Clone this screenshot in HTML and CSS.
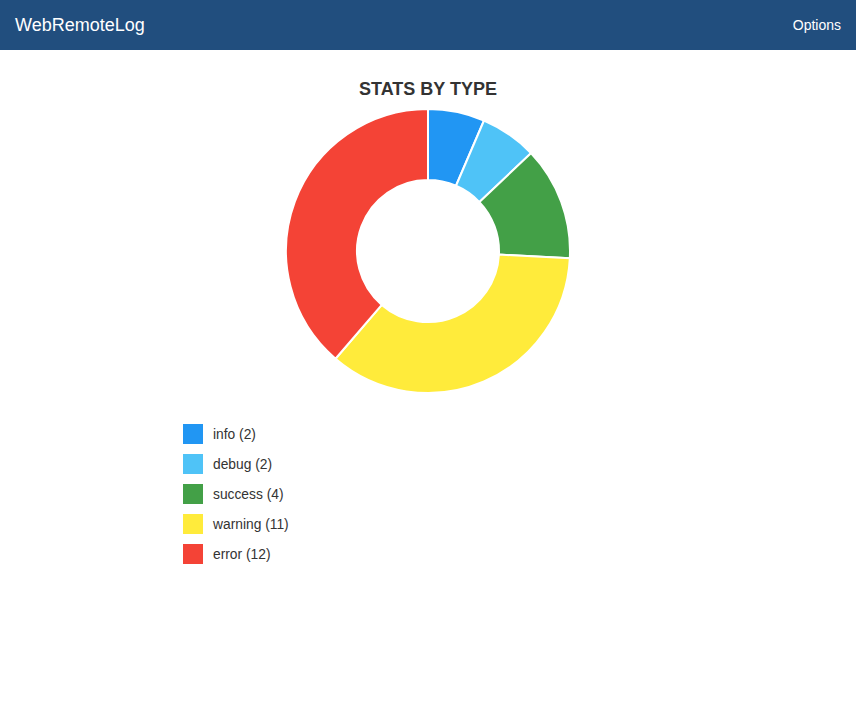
FILE: index.html
```html
<!DOCTYPE html>
<html>
<head>
<meta charset="utf-8">
<title>WebRemoteLog</title>
<link rel="stylesheet" href="styles.css">
</head>
<body>
<header class="topbar">
  <span class="brand">WebRemoteLog</span>
  <span class="options">Options</span>
</header>
<main class="content">
  <h1 class="chart-title">STATS BY TYPE</h1>
  <svg class="donut" width="288" height="288" viewBox="-144 -144 288 288">
    <g stroke="#fff" stroke-width="2" stroke-linejoin="round">
      <path fill="#2196f3" d="M0,-142 A142,142 0 0 1 56,-130.5 L28,-65.25 A71,71 0 0 0 0,-71 Z"/>
      <path fill="#4fc3f7" d="M56,-130.5 A142,142 0 0 1 102.92,-97.84 L51.46,-48.92 A71,71 0 0 0 28,-65.25 Z"/>
      <path fill="#43a047" d="M102.92,-97.84 A142,142 0 0 1 141.82,7.19 L70.91,3.6 A71,71 0 0 0 51.46,-48.92 Z"/>
      <path fill="#ffeb3b" d="M141.82,7.19 A142,142 0 0 1 -92.5,107.74 L-46.25,53.87 A71,71 0 0 0 70.91,3.6 Z"/>
      <path fill="#f44336" d="M-92.5,107.74 A142,142 0 0 1 0,-142 L0,-71 A71,71 0 0 0 -46.25,53.87 Z"/>
    </g>
  </svg>
  <ul class="legend">
    <li class="legend-item"><span class="swatch info"></span>info (2)</li>
    <li class="legend-item"><span class="swatch debug"></span>debug (2)</li>
    <li class="legend-item"><span class="swatch success"></span>success (4)</li>
    <li class="legend-item"><span class="swatch warning"></span>warning (11)</li>
    <li class="legend-item"><span class="swatch error"></span>error (12)</li>
  </ul>
</main>
</body>
</html>
```
FILE: styles.css
```css
* { box-sizing: border-box; }
html, body { margin: 0; padding: 0; background: #fff; }
body {
  font-family: "Liberation Sans", Arial, Helvetica, sans-serif;
  color: #333;
}
.topbar {
  height: 50px;
  background: #214e7e;
  color: #fff;
  display: flex;
  align-items: center;
  justify-content: space-between;
  padding: 0 15px;
}
.brand { font-size: 18px; }
.options { font-size: 14px; }
.content {
  padding-top: 29px;
  display: flex;
  flex-direction: column;
}
.chart-title {
  margin: 0;
  font-size: 18px;
  line-height: 21px;
  font-weight: bold;
  text-align: center;
  color: #333;
}
.donut {
  display: block;
  margin: 7px auto 0;
}
.legend {
  list-style: none;
  margin: 29px 0 0 183px;
  padding: 0;
  display: flex;
  flex-direction: column;
  gap: 10px;
}
.legend-item {
  display: flex;
  align-items: center;
  gap: 10px;
  height: 20px;
  font-size: 13.8px;
  color: #333;
}
.swatch { width: 20px; height: 20px; display: block; }
.swatch.info { background: #2196f3; }
.swatch.debug { background: #4fc3f7; }
.swatch.success { background: #43a047; }
.swatch.warning { background: #ffeb3b; }
.swatch.error { background: #f44336; }
```
